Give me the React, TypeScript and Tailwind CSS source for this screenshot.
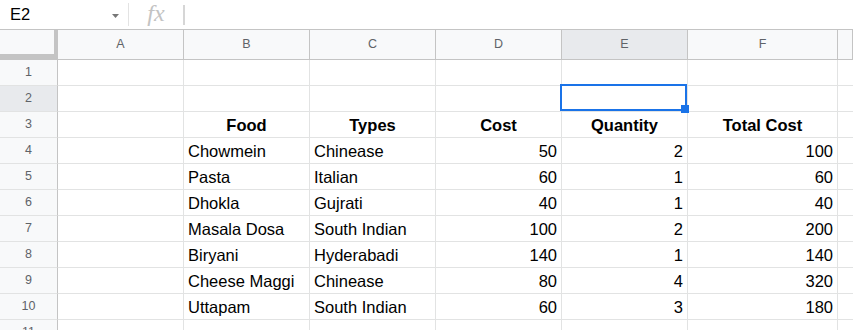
import React from "react";

const rows: (string | number)[][] = [
  ["", "", "", "", "", ""],
  ["", "", "", "", "", ""],
  ["", "Food", "Types", "Cost", "Quantity", "Total Cost"],
  ["", "Chowmein", "Chinease", 50, 2, 100],
  ["", "Pasta", "Italian", 60, 1, 60],
  ["", "Dhokla", "Gujrati", 40, 1, 40],
  ["", "Masala Dosa", "South Indian", 100, 2, 200],
  ["", "Biryani", "Hyderabadi", 140, 1, 140],
  ["", "Cheese Maggi", "Chinease", 80, 4, 320],
  ["", "Uttapam", "South Indian", 60, 3, 180],
  ["", "", "", "", "", ""],
];

const cols = ["A", "B", "C", "D", "E", "F", ""];

export default function App() {
  return (
    <div
      className="w-[853px] h-[330px] overflow-hidden bg-white text-black"
      style={{ fontFamily: '"Liberation Sans", Arial, sans-serif' }}
    >
      {/* formula bar */}
      <div className="h-[29px] flex items-center">
        <div className="w-[128px] h-full flex items-center pl-[10px] pr-[9px]">
          <span className="text-[16.5px] leading-none flex-1">E2</span>
          <svg width="7" height="4" viewBox="0 0 7 4" className="mt-[2px]">
            <path d="M0 0 L7 0 L3.5 4 Z" fill="#777" />
          </svg>
        </div>
        <div className="w-px h-[23px] bg-[#e3e3e3]" />
        <div className="w-[54px] h-full flex items-center justify-center">
          <span
            className="text-[24px] italic leading-none text-[#c3c3c3] -mt-[4px]"
            style={{ fontFamily: '"Liberation Serif", "Times New Roman", serif' }}
          >
            fx
          </span>
        </div>
        <div className="w-[2px] h-[20px] bg-[#d6d6d6]" />
      </div>

      {/* grid */}
      <div className="grid grid-cols-[58px_126px_126px_126px_126px_126px_150px_1fr]">
        {/* header row */}
        <div className="relative h-[31px] bg-[#f8f9fa] border-t border-b border-[#c4c4c4]">
          <div className="absolute right-0 top-0 bottom-0 w-[4px] bg-[#c4c4c4]" />
          <div className="absolute left-0 right-0 bottom-0 h-[5px] bg-[#c4c4c4]" />
        </div>
        {cols.map((c, k) => (
          <div
            key={k}
            className={`h-[31px] border-t border-b border-r border-[#c4c4c4] flex items-center justify-center text-[12.5px] text-[#5f6368] ${
              c === "E" ? "bg-[#e8eaed]" : "bg-[#f8f9fa]"
            }`}
          >
            {c}
          </div>
        ))}

        {rows.map((r, i) => {
          const rowNum = i + 1;
          return (
            <React.Fragment key={i}>
              <div
                className={`h-[26px] border-r border-r-[#c4c4c4] border-b border-b-[#e2e3e3] flex items-center justify-center text-[12.5px] text-[#5f6368] ${
                  rowNum === 2 ? "bg-[#e8eaed]" : "bg-[#f8f9fa]"
                }`}
              >
                {rowNum}
              </div>
              {r.map((v, j) => {
                const isNum = typeof v === "number";
                const isHead = rowNum === 3 && v !== "";
                const selected = rowNum === 2 && j === 4;
                return (
                  <div
                    key={j}
                    className={`relative h-[26px] border-r border-b border-[#e2e3e3] flex items-end pb-[2px] px-[4px] text-[16.5px] leading-[20px] whitespace-nowrap ${
                      isHead
                        ? "justify-center font-bold"
                        : isNum
                        ? "justify-end"
                        : "justify-start"
                    }`}
                  >
                    {v}
                    {selected && (
                      <>
                        <div className="absolute left-[-2px] top-[-2px] right-0 bottom-0 border-2 border-[#1a73e8] z-10" />
                        <div className="absolute right-[-2px] bottom-[-2px] w-[8px] h-[8px] bg-[#1a73e8] z-20" />
                      </>
                    )}
                  </div>
                );
              })}
              <div className="h-[26px] border-b border-[#e2e3e3]" />
            </React.Fragment>
          );
        })}
      </div>
    </div>
  );
}
